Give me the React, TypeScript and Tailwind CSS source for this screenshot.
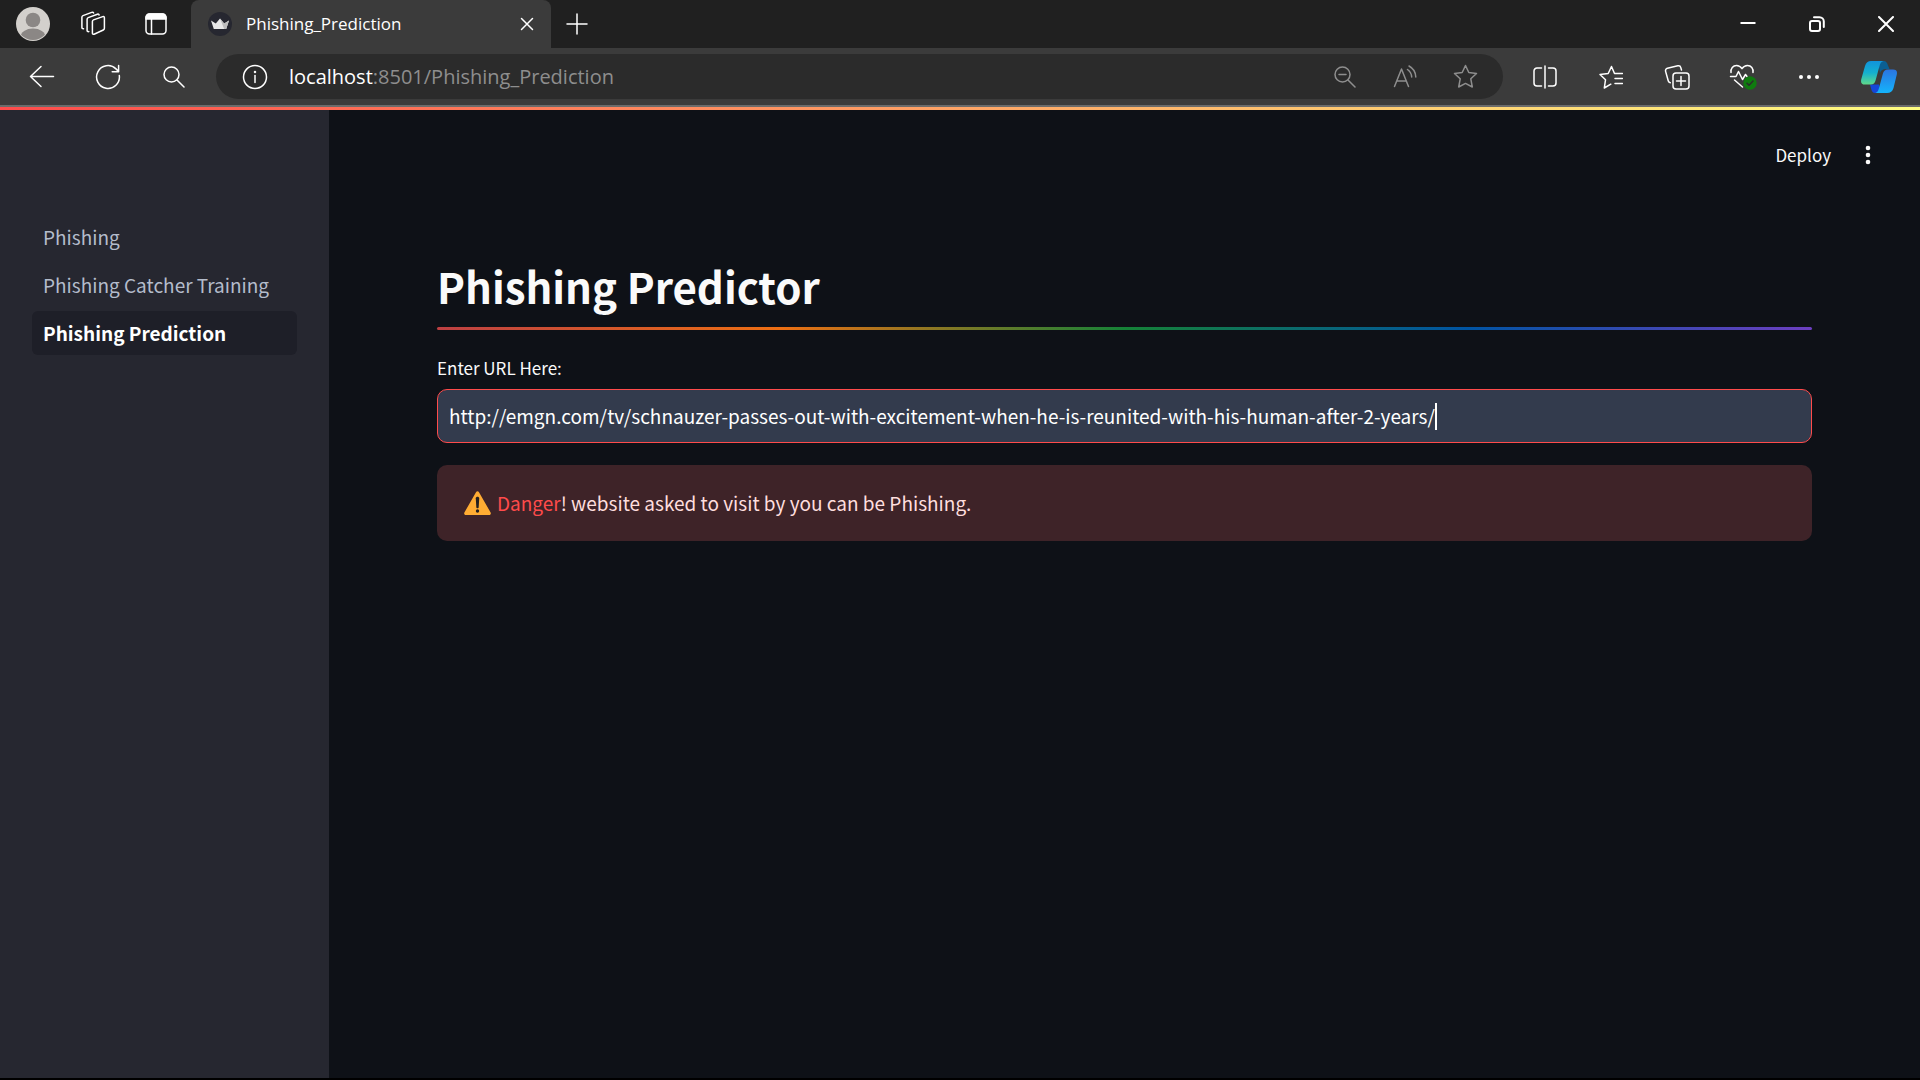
import React from "react";

const pageFont = "font-['Noto_Sans_CJK_SC','Noto_Sans',sans-serif]";
const chromeFont = "font-['Open_Sans','Noto_Sans',sans-serif]";

function Icon({ size = 24, children, className = "" }: { size?: number; children: React.ReactNode; className?: string }) {
  return (
    <svg
      width={size}
      height={size}
      viewBox={`0 0 ${size} ${size}`}
      fill="none"
      stroke="currentColor"
      strokeWidth="1.5"
      strokeLinecap="round"
      strokeLinejoin="round"
      aria-hidden="true"
      className={`shrink-0 ${className}`}
    >
      {children}
    </svg>
  );
}

function IconButton({ label, className, children }: { label: string; className: string; children: React.ReactNode }) {
  return (
    <button type="button" aria-label={label} className={`flex h-full shrink-0 items-center justify-center ${className}`}>
      {children}
    </button>
  );
}

function TabStrip() {
  return (
    <header className="flex h-12 shrink-0 items-stretch bg-[#202020] text-white">
      <IconButton label="Profile" className="w-[66px]">
        <svg width="34" height="34" viewBox="0 0 34 34" aria-hidden="true">
          <defs>
            <clipPath id="avatar">
              <circle cx="17" cy="17" r="16" />
            </clipPath>
          </defs>
          <circle cx="17" cy="17" r="17" fill="#d3d0cc" />
          <circle cx="17" cy="13" r="7.3" fill="#8b8785" />
          <ellipse cx="17" cy="30" rx="12.5" ry="8.5" fill="#8b8785" clipPath="url(#avatar)" />
        </svg>
      </IconButton>
      <IconButton label="Workspaces" className="w-[54px]">
        <Icon size={26}>
          <path d="M12.400 10.500c0-.8.4-1.300 1.100-1.600l9.300-3.300c.8-.3 1.600.2 1.600 1.100v10.600c0 .8-.4 1.400-1.100 1.700l-9.200 4.200c-.8.4-1.700-.1-1.700-1z" />
          <path d="M8.800 20.600c-1 .2-1.700-.2-1.700-1.200V8.200c0-.8.4-1.300 1.100-1.600l9.200-3.400c.8-.3 1.500 0 1.700.8" />
          <path d="M3.500 17.700c-1 .1-1.600-.3-1.600-1.200V6.200c0-.8.4-1.300 1.100-1.600l8.700-3.200c.9-.3 1.600-.1 1.900.6" />
        </Icon>
      </IconButton>
      <IconButton label="Tab actions" className="w-[71px]">
        <Icon size={22}>
          <rect x="1" y="1" width="20" height="20" rx="3.500" />
          <path d="M1 6V4.500A3.500 3.500 0 0 1 4.500 1h13A3.500 3.500 0 0 1 21 4.500V6z" fill="currentColor" />
          <path d="M6.500 6v15" />
        </Icon>
      </IconButton>
      <div className="flex w-[360px] items-center rounded-t-lg bg-[#3b3b3b] pl-[17px] pr-1">
        <svg width="24" height="24" viewBox="0 0 24 24" aria-hidden="true" className="shrink-0">
          <circle cx="12" cy="12" r="12" fill="#262730" />
          <path d="M3 8.500l4.800 3L12 6.500l4.200 5 4.800-3-2.800 8.500H5.800z" fill="#e8e8e8" />
          <path d="M12 6.500l4.200 5 4.800-3-2.800 8.500h-2z" fill="#bdbdbd" />
        </svg>
        <span className={`ml-[14px] flex-1 text-[17px] leading-6 ${chromeFont}`}>Phishing_Prediction</span>
        <IconButton label="Close tab" className="w-10">
          <Icon size={14}>
            <path d="M1.500 1.500l11 11M12.500 1.500l-11 11" />
          </Icon>
        </IconButton>
      </div>
      <IconButton label="New tab" className="w-[52px]">
        <Icon size={22}>
          <path d="M11 1v20M1 11h20" />
        </Icon>
      </IconButton>
      <div className="flex-1" />
      <IconButton label="Minimize" className="w-[69px]">
        <Icon size={16}>
          <path d="M.5 7h15" strokeWidth="2" strokeLinecap="butt" />
        </Icon>
      </IconButton>
      <IconButton label="Restore" className="w-[69px]">
        <Icon size={16}>
          <g strokeWidth="2">
            <rect x="1" y="5" width="10" height="10" rx="2" />
            <path d="M5 1.200h5.500A4.300 4.300 0 0 1 14.800 5.500V11" />
          </g>
        </Icon>
      </IconButton>
      <IconButton label="Close window" className="w-[69px]">
        <Icon size={16}>
          <path d="M1 1l14 14M15 1L1 15" strokeWidth="2" />
        </Icon>
      </IconButton>
    </header>
  );
}

function Toolbar() {
  return (
    <nav aria-label="Browser toolbar" className="flex h-[59px] shrink-0 items-center border-b-2 border-[#6b6b6b] bg-[#3b3b3b] text-white">
      <div className="flex h-full items-center px-[9px]">
        <IconButton label="Back" className="w-[66px]">
          <Icon size={26}>
            <path d="M24.500 12.500H1.500M12 2.500L1.500 12.500 12 22.500" />
          </Icon>
        </IconButton>
        <IconButton label="Refresh" className="w-[66px]">
          <Icon size={26}>
            <path d="M24.300 11.500A11.400 11.400 0 1 1 21 4.900l2.500 2.500M23.600 1.500v6.300h-6.400" />
          </Icon>
        </IconButton>
        <IconButton label="Search" className="w-[66px]">
          <Icon size={22}>
            <circle cx="8.500" cy="8.500" r="7.500" />
            <path d="M14 14l7 7" />
          </Icon>
        </IconButton>
      </div>
      <div className="flex h-[45px] min-w-0 flex-1 items-center rounded-full bg-[#2b2b2b] pl-[26px] pr-2">
        <Icon size={26}>
          <circle cx="13" cy="13" r="11.500" />
          <path d="M13 11.500v7" />
          <circle cx="13" cy="8" r=".5" />
        </Icon>
        <span className={`ml-[21px] min-w-0 flex-1 truncate text-[20px] leading-7 text-[#8e8e8e] ${chromeFont}`}>
          <span className="text-white">localhost</span>:8501/Phishing_Prediction
        </span>
        <IconButton label="Zoom out" className="w-[60px] text-[#8e8e8e]">
          <Icon size={22}>
            <circle cx="8.500" cy="8.500" r="7.500" />
            <path d="M14 14l7 7M5 8.500h7" />
          </Icon>
        </IconButton>
        <IconButton label="Read aloud" className="w-[60px] text-[#8e8e8e]">
          <Icon size={24}>
            <path d="M1.500 21.500L8.500 4 15.500 21.500M4 16h9" />
            <path d="M14.500 4.500a10 10 0 0 1 4.200 7.500M16 1a13 13 0 0 1 6.800 11" />
          </Icon>
        </IconButton>
        <IconButton label="Add to favorites" className="w-[60px] text-[#8e8e8e]">
          <Icon size={25}>
            <path d="M12.500 1.500l3.300 7 7.700 1-5.700 5.300 1.500 8.200-6.800-3.600-6.800 3.600 1.500-8.200L1.500 9.500l7.700-1z" />
          </Icon>
        </IconButton>
      </div>
      <div className="flex h-full items-center pl-[9px]">
        <IconButton label="Split screen" className="w-[66px]">
          <Icon size={24}>
            <path d="M12 1v22" />
            <path d="M8.500 3H4a3 3 0 0 0-3 3v12a3 3 0 0 0 3 3h4.500M15.500 3H20a3 3 0 0 1 3 3v12a3 3 0 0 1-3 3h-4.500" />
          </Icon>
        </IconButton>
        <IconButton label="Favorites" className="w-[66px]">
          <Icon size={24}>
            <path d="M15.500 8.500L12.500 1.500l-3.300 7-8.200 1 5.500 5.300-1.200 8.200 6.500-3.800M15.500 8.500h8M16 13.500h7.500M16 18.500h7.500" />
          </Icon>
        </IconButton>
        <IconButton label="Collections" className="w-[66px]">
          <Icon size={26}>
            <rect x="9" y="9" width="16" height="16" rx="3" />
            <path d="M17 12.500v9M12.500 17h9" />
            <path d="M17.500 6l-.7-2.400a2.500 2.500 0 0 0-3-1.800L3.400 4.300A2.500 2.500 0 0 0 1.600 7.400l2.700 9.600c.3 1 1 1.600 2 1.700" />
          </Icon>
        </IconButton>
        <IconButton label="Browser essentials" className="w-[66px]">
          <Icon size={28}>
            <path d="M2 9.500C1.500 5.500 4 2.500 7.500 2.500c2.800 0 4.300 1.300 5.500 3.200 1.200-1.900 2.700-3.200 5.500-3.200 3.700 0 6 3 5.500 7" />
            <path d="M1.500 13.500H7l2.500-5 4 8 3-5 1.500 2M5.500 17l8 7" />
            <circle cx="21" cy="20" r="6.700" fill="#0f7b0f" stroke="none" />
            <path d="M18 20.300l2 2 4-4.300" stroke="#2b2b2b" />
          </Icon>
        </IconButton>
        <IconButton label="More" className="w-[66px]">
          <Icon size={22}>
            <g fill="currentColor" stroke="none">
              <circle cx="3" cy="11" r="2" />
              <circle cx="11" cy="11" r="2" />
              <circle cx="19" cy="11" r="2" />
            </g>
          </Icon>
        </IconButton>
        <IconButton label="Copilot" className="w-[78px] pr-1">
          <svg width="36" height="32" viewBox="0 0 36 32" aria-hidden="true">
            <defs>
              <linearGradient id="cpA" x1="0" y1="0" x2="0" y2="1">
                <stop offset="0" stopColor="#1193dc" />
                <stop offset=".5" stopColor="#14b0cf" />
                <stop offset="1" stopColor="#5fd98a" />
              </linearGradient>
              <linearGradient id="cpB" x1="0" y1="0" x2="0" y2="1">
                <stop offset="0" stopColor="#2b74e2" />
                <stop offset="1" stopColor="#14b4fb" />
              </linearGradient>
            </defs>
            <path d="M17 0h6c2 0 3 1.500 4 4.500L28.500 8H25c-3 0-5 1-6 4z" fill="#0b5f93" />
            <path d="M9 23.500h9l1 8.500h-5c-2.200 0-3-1.500-3.800-4z" fill="#1547d8" />
            <path d="M10 0h12.500c-2.500.5-3.300 2.500-4 5l-3.800 14c-.8 3-2.200 4.500-5 4.500H4c-3.200 0-4.500-1.500-3.800-5L4 5C5 1.500 7 0 10 0z" fill="url(#cpA)" />
            <path d="M26 32H14.500c2-.5 2.800-2.500 3.500-5l3.800-14c.8-3 2.200-4.500 5-4.500H32c3.200 0 4.500 1.500 3.800 5L32.500 27c-1 3.500-3 5-6.500 5z" fill="url(#cpB)" />
          </svg>
        </IconButton>
      </div>
    </nav>
  );
}

const pages = [
  { name: "Phishing", active: false },
  { name: "Phishing Catcher Training", active: false },
  { name: "Phishing Prediction", active: true },
];

function Sidebar() {
  return (
    <aside className="w-[329px] shrink-0 bg-[#262730] px-8 pt-[105px]">
      <ul className="flex flex-col gap-1">
        {pages.map((page) => (
          <li key={page.name}>
            <a
              href="#"
              aria-current={page.active ? "page" : undefined}
              className={`flex h-11 items-center rounded-md px-[11px] text-[19px] leading-7 whitespace-nowrap ${
                page.active ? "bg-[#1e1f28] font-bold text-white" : "text-[#b4bccb]"
              }`}
            >
              {page.name}
            </a>
          </li>
        ))}
      </ul>
    </aside>
  );
}

function UrlField() {
  const [url, setUrl] = React.useState(
    "http://emgn.com/tv/schnauzer-passes-out-with-excitement-when-he-is-reunited-with-his-human-after-2-years/"
  );
  return (
    <div className="mt-6 flex flex-col">
      <label htmlFor="url" className="text-[17px] leading-7 text-[#fafafa]">
        Enter URL Here:
      </label>
      <div className="mt-[7px] flex h-[54px] items-center rounded-[10px] border border-[#ff4b4b] bg-[#333b4d] px-[11px]">
        <input
          id="url"
          type="text"
          value={url}
          onChange={(e) => setUrl(e.target.value)}
          className="max-w-full bg-transparent text-[19px] leading-7 text-white outline-none [field-sizing:content]"
        />
        <span aria-hidden="true" className="h-[27px] w-[2px] shrink-0 bg-white" />
      </div>
    </div>
  );
}

function Main() {
  return (
    <main className="flex min-w-0 flex-1 flex-col">
      <div className="flex items-center justify-end pt-[25px] pr-[38px] text-[#fafafa]">
        <button type="button" className="px-3 text-[17px] leading-10">
          Deploy
        </button>
        <button type="button" aria-label="Main menu" className="ml-[11px] flex h-10 w-7 items-center justify-center">
          <svg width="6" height="20" viewBox="0 0 6 20" fill="currentColor" aria-hidden="true">
            <circle cx="3" cy="3" r="2.300" />
            <circle cx="3" cy="10" r="2.300" />
            <circle cx="3" cy="17" r="2.300" />
          </svg>
        </button>
      </div>
      <div className="px-[108px] pt-[81px]">
        <h1 className="text-[42px] leading-[60px] font-bold text-[#fafafa]">Phishing Predictor</h1>
        <div className="mt-[11px] h-[3px] rounded-full bg-[linear-gradient(to_right,#bd4043,#ed6f13,#158237,#0054a3,#6c3fc0)]" />
        <UrlField />
        <div role="alert" className="mt-[22px] flex h-[76px] items-center rounded-[10px] bg-[#3e2328] px-[27px] text-[19px] leading-7 text-[#ffdede]">
          <svg width="27" height="24" viewBox="0 0 27 24" aria-hidden="true" className="shrink-0">
            <path d="M12 1.200c.7-1.400 2.300-1.400 3 0L26.600 21.500c.6 1.200 0 2.500-1.400 2.500H1.800C.4 24-.2 22.700.4 21.500z" fill="#ffac33" />
            <path d="M11.800 7.200c0-2 3.400-2 3.400 0l-.5 9c-.1 1.400-2.300 1.400-2.400 0z" fill="#231f20" />
            <circle cx="13.500" cy="20" r="1.700" fill="#231f20" />
          </svg>
          <p className="ml-[6px]">
            <span className="text-[#ff4b4b]">Danger</span>! website asked to visit by you can be Phishing.
          </p>
        </div>
      </div>
    </main>
  );
}

export default function App() {
  return (
    <div className={`flex min-h-screen flex-col border-b-2 border-black bg-[#0e1117] ${pageFont}`}>
      <TabStrip />
      <Toolbar />
      <div className="h-[3px] shrink-0 bg-[linear-gradient(to_right,#ff4b4b,#fffd80)]" />
      <div className="flex flex-1">
        <Sidebar />
        <Main />
      </div>
    </div>
  );
}
